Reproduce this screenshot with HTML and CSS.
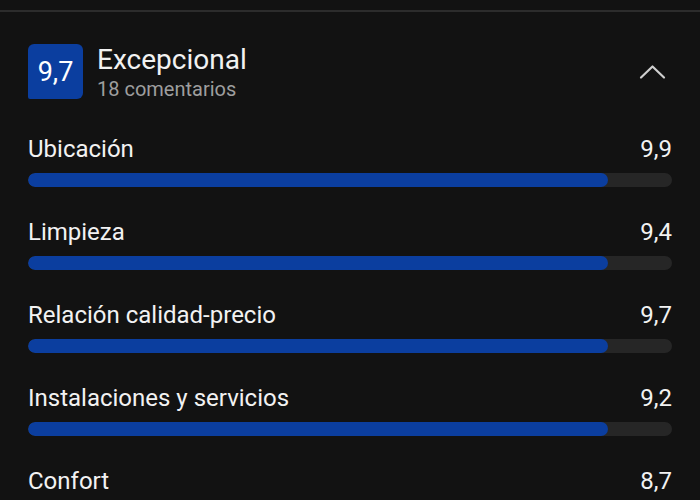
FILE: index.html
```html
<!DOCTYPE html>
<html lang="es">
<head>
<meta charset="utf-8">
<link rel="stylesheet" href="styles.css">
</head>
<body>
<div class="divider"></div>
<section class="reviews">
  <header class="summary">
    <div class="badge">9,7</div>
    <div class="summary-text">
      <div class="title">Excepcional</div>
      <div class="subtitle">18 comentarios</div>
    </div>
    <svg class="chevron" width="28" height="16" viewBox="0 0 28 16">
      <polyline points="2,13.5 13.5,2.5 25,13.5" fill="none" stroke="#cfcfcf" stroke-width="2.2" stroke-linecap="round" stroke-linejoin="round"/>
    </svg>
  </header>
  <div class="rows">
    <div class="row">
      <div class="row-head"><span>Ubicación</span><span>9,9</span></div>
      <div class="track"><div class="fill" style="width:90%"></div></div>
    </div>
    <div class="row">
      <div class="row-head"><span>Limpieza</span><span>9,4</span></div>
      <div class="track"><div class="fill" style="width:90%"></div></div>
    </div>
    <div class="row">
      <div class="row-head"><span>Relación calidad-precio</span><span>9,7</span></div>
      <div class="track"><div class="fill" style="width:90%"></div></div>
    </div>
    <div class="row">
      <div class="row-head"><span>Instalaciones y servicios</span><span>9,2</span></div>
      <div class="track"><div class="fill" style="width:90%"></div></div>
    </div>
    <div class="row">
      <div class="row-head"><span>Confort</span><span>8,7</span></div>
      <div class="track"><div class="fill" style="width:90%"></div></div>
    </div>
  </div>
</section>
</body>
</html>
```
FILE: styles.css
```css
html, body {
  margin: 0;
  padding: 0;
  background: #121212;
  color: #f2f2f2;
  font-family: Roboto, "Noto Sans", sans-serif;
  overflow: hidden;
}
.divider {
  margin-top: 10px;
  height: 2px;
  background: #2c2c2c;
}
.reviews {
  padding: 32px 28px 0 28px;
}
.summary {
  display: flex;
  align-items: flex-start;
  height: 55px;
}
.badge {
  width: 55px;
  height: 55px;
  background: #0b3e9f;
  border-radius: 6px 6px 6px 2px;
  color: #fff;
  font-size: 27px;
  display: flex;
  align-items: center;
  justify-content: center;
  flex-shrink: 0;
}
.summary-text {
  margin-left: 14px;
  flex: 1;
}
.title {
  font-size: 28px;
  line-height: 32px;
  color: #f2f2f2;
}
.subtitle {
  margin-top: 1px;
  font-size: 20px;
  line-height: 24px;
  color: #9e9e9e;
}
.chevron {
  margin-top: 20px;
  margin-right: 5px;
}
.rows {
  margin-top: 35px;
  display: flex;
  flex-direction: column;
  gap: 30px;
}
.row-head {
  display: flex;
  justify-content: space-between;
  font-size: 24px;
  line-height: 30px;
  color: #f2f2f2;
}
.track {
  margin-top: 9px;
  height: 14px;
  border-radius: 7px;
  background: #262626;
  overflow: hidden;
}
.fill {
  height: 100%;
  border-radius: 7px;
  background: #0b3e9f;
}
```
